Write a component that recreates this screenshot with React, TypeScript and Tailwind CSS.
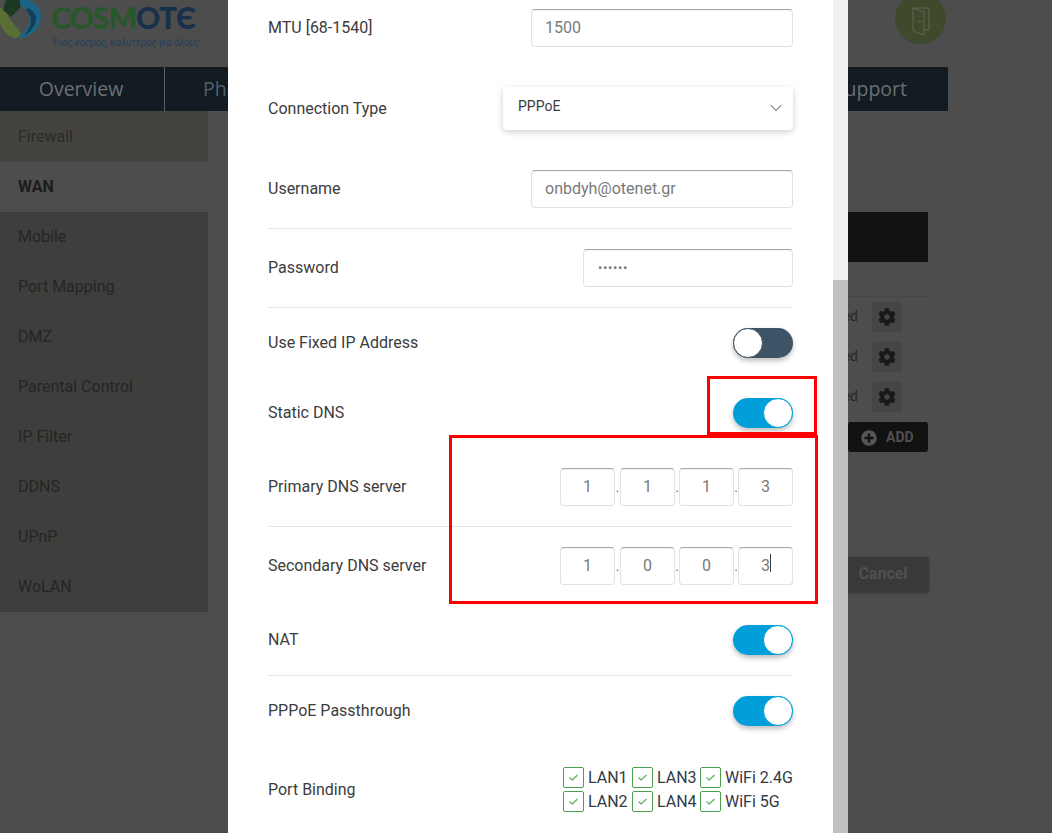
import React from "react";
import { ChevronDown } from "lucide-react";
import { FaCog, FaPlusCircle } from "react-icons/fa";

const inputBase =
  "h-[38px] rounded-[4px] border border-[#e2e2e2] border-t-[#a8a8a8] bg-white text-base text-[#7a7a7a] shadow-[inset_0_1px_1px_rgba(0,0,0,0.05)] flex items-center";

function Toggle({ on }: { on: boolean }) {
  return on ? (
    <div className="h-[30px] w-[60px] rounded-full bg-[#009fda] flex justify-end shadow-[0_3px_5px_rgba(0,0,0,0.25)]">
      <div className="h-[30px] w-[30px] rounded-full bg-white border border-[#009fda]" />
    </div>
  ) : (
    <div className="h-[30px] w-[60px] rounded-full bg-[#3d5366] flex justify-start shadow-[0_3px_5px_rgba(0,0,0,0.25)]">
      <div className="h-[30px] w-[30px] rounded-full bg-white border border-[#3d5366]" />
    </div>
  );
}

function Label({ children }: { children: React.ReactNode }) {
  return <span className="text-base text-[#3c3c3c]">{children}</span>;
}

function IpBox({ value, caret }: { value: string; caret?: boolean }) {
  return (
    <div className={`${inputBase} w-[55px] justify-center`}>
      <span className="relative">
        {value}
        {caret && <span className="absolute left-[9px] top-0 h-[18px] w-px bg-[#3c3c3c]" />}
      </span>
    </div>
  );
}

function IpRow({ values, caretLast }: { values: string[]; caretLast?: boolean }) {
  return (
    <div className="flex items-center">
      {values.map((v, i) => (
        <React.Fragment key={i}>
          {i > 0 && (
            <span
              className={`${i === 1 ? "w-[5px]" : "w-[4px]"} self-end pb-[12px] text-center text-[12px] leading-[12px] text-[#555]`}
            >
              .
            </span>
          )}
          <IpBox value={v} caret={caretLast && i === 3} />
        </React.Fragment>
      ))}
    </div>
  );
}

function Check({ label }: { label: string }) {
  return (
    <div className="flex items-center gap-[4px] h-[21px]">
      <div className="h-[21px] w-[21px] shrink-0 rounded-[2px] border border-[#4aa04e] flex items-center justify-center">
        <svg width="11" height="9" viewBox="0 0 11 9" fill="none">
          <path d="M1.5 4.5 L4.2 7 L9.5 2" stroke="#6cbb70" strokeWidth="1.6" />
        </svg>
      </div>
      <span className="text-base leading-[21px] text-[#333a44] whitespace-nowrap">{label}</span>
    </div>
  );
}

function SettingRow({ label }: { label: string }) {
  return (
    <div className="h-[30px] flex items-center justify-end gap-[14px] mb-[10px] mr-[26px]">
      <span className="text-sm text-[#262626] -mt-[2px]">Enabled</span>
      <div className="h-[30px] w-[30px] rounded-[3px] bg-[#454545] flex items-center justify-center" aria-label={label}>
        <FaCog className="text-[#191919] text-[18px]" />
      </div>
    </div>
  );
}

const sideItems = ["Firewall", "WAN", "Mobile", "Port Mapping", "DMZ", "Parental Control", "IP Filter", "DDNS", "UPnP", "WoLAN"];

function Logo() {
  return (
    <div className="flex items-start">
      <svg width="45" height="40" viewBox="0 0 45 40" className="shrink-0">
        <path d="M0 8 C-3 18 0 33 14 38 C20 38 19 36 21 33 L10 19 C7 16 8 12 10 9 Z" fill="#5a6f34" />
        <path d="M6 0 H22 L20 8 L11 17 L3 10 Z" fill="#1c3a22" />
        <path d="M20 0 C34 -2 42 8 41 18 C40 30 30 38 17 38 C22 34 26 31 29 24 C32 19 30 14 26 10 L20 5 Z" fill="#1c6485" />
        <path d="M26 10 C33 17 33 26 24 35 C30 33 36 26 36 18 C36 14 32 10 28 8 Z" fill="#123f5c" />
      </svg>
      <div className="ml-[6px] flex flex-col">
        <div className="font-['Lato'] font-black text-[30px] leading-[34px] tracking-[-0.9px] h-[36px] whitespace-nowrap">
          <span className="text-[#27582a]">COSM</span>
          <span className="text-[#19304a]">OTЄ</span>
        </div>
        <div className="mt-[1px] text-[10px] leading-[12px] italic tracking-[-0.2px] text-[#24405a] whitespace-nowrap ml-[1px]">
          Ένας κόσμος, καλύτερος για όλους.
        </div>
      </div>
    </div>
  );
}

function Door() {
  return (
    <div className="-mt-[7px] mr-[106px] h-[51px] w-[51px] rounded-full bg-[#3f4a2d] flex items-center justify-center">
      <svg width="20" height="32" viewBox="0 0 20 32" fill="none" stroke="#5c6650" strokeWidth="1" className="mt-[7px]">
        <path d="M2 2 H18 V24 H13" />
        <path d="M2 2 L13 6 V29 L2 25 Z" />
        <circle cx="9" cy="15.5" r="0.8" fill="#5c6650" />
      </svg>
    </div>
  );
}

export default function App() {
  return (
    <div className="relative h-[833px] w-[1052px] overflow-hidden bg-[#4d4d4d] font-['Roboto',sans-serif]">
      <header className="h-[67px] flex items-start justify-between overflow-hidden">
        <Logo />
        <Door />
      </header>

      <nav className="h-[44px] w-[948px] bg-[#121a22] flex items-center text-[19.5px] text-[#6b7075] font-['Open_Sans',sans-serif]">
        <div className="h-full w-[165px] pr-[2px] border-r border-[#5b6167] flex items-center justify-center">Overview</div>
        <div className="ml-[38px] text-[#4f6070]">Phone</div>
        <div className="ml-auto mr-[41px]">Support</div>
      </nav>

      <div className="flex">
        <aside className="w-[208px]">
          {sideItems.map((s, i) => (
            <div
              key={s}
              className={`pl-[18px] flex items-center text-base ${
                i === 0
                  ? "h-[51px] bg-[#444340] text-[#2a2a2a]"
                  : i === 1
                    ? "h-[50px] font-bold text-[#1c1c1c]"
                    : "h-[50px] bg-[#3e3e3c] text-[#252525]"
              }`}
            >
              {s}
            </div>
          ))}
        </aside>

        <main className="w-[720px] pt-[101px] pl-[400px]">
          <div className="h-[50px] bg-[#121212]" />
          <div className="mt-[34px] border-t border-[#454545] pt-[5px]">
            <SettingRow label="Settings 1" />
            <SettingRow label="Settings 2" />
            <SettingRow label="Settings 3" />
          </div>
          <div className="flex justify-end">
            <div className="h-[30px] w-[80px] rounded-[3px] bg-[#121212] flex items-center gap-[9px] pl-[13px]">
              <FaPlusCircle className="text-[#555] text-[16px] mt-[1px]" />
              <span className="text-sm font-bold text-[#505050] -mt-[1px]">ADD</span>
            </div>
          </div>
          <div className="mt-[105px] flex justify-end -mr-px">
            <div className="h-[35px] w-[92px] rounded-[3px] bg-[#393939] shadow-[0_1px_3px_rgba(0,0,0,0.3)] flex items-center justify-center text-base font-bold text-[#505050]">
              <span className="-mt-[2px]">Cancel</span>
            </div>
          </div>
        </main>
      </div>

      {/* Modal */}
      <div className="absolute left-[228px] top-0 h-[833px] w-[620px] bg-white flex">
        <div className="w-[605px] px-[40px] pt-[9px]">
          <div className="flex h-[38px] items-center justify-between">
            <Label>MTU [68-1540]</Label>
            <div className={`${inputBase} w-[262px] pl-[13px]`}>1500</div>
          </div>

          <div className="mt-[40px] flex h-[43px] items-center justify-between">
            <Label>Connection Type</Label>
            <div className="h-[43px] w-[290px] rounded-[4px] bg-white shadow-[0_2px_6px_rgba(0,0,0,0.2)] flex items-center justify-between pl-[15px] pr-[7px] text-sm text-[#3a3a3a]">
              <span className="-mt-[5px]">PPPoE</span>
              <ChevronDown size={20} strokeWidth={1.5} className="text-[#999] -mt-[1px]" />
            </div>
          </div>

          <div className="mt-[40px] flex h-[59px] items-start justify-between border-b border-[#e4e4e4]">
            <div className="flex h-[38px] items-center"><Label>Username</Label></div>
            <div className={`${inputBase} w-[262px] pl-[13px]`}>onbdyh@otenet.gr</div>
          </div>

          <div className="mt-[20px] flex h-[59px] items-start justify-between border-b border-[#e4e4e4]">
            <div className="flex h-[38px] items-center"><Label>Password</Label></div>
            <div className={`${inputBase} w-[210px] pl-[14px] text-[13px] tracking-[0.6px]`}>••••••</div>
          </div>

          <div className="mt-[20px] flex h-[30px] items-center justify-between">
            <Label>Use Fixed IP Address</Label>
            <Toggle on={false} />
          </div>

          <div className="mt-[40px] flex h-[30px] items-center justify-between">
            <Label>Static DNS</Label>
            <Toggle on />
          </div>

          <div className="mt-[40px] flex h-[59px] items-start justify-between border-b border-[#e4e4e4]">
            <div className="flex h-[38px] items-center"><Label>Primary DNS server</Label></div>
            <IpRow values={["1", "1", "1", "3"]} />
          </div>

          <div className="mt-[20px] flex h-[38px] items-center justify-between">
            <Label>Secondary DNS server</Label>
            <IpRow values={["1", "0", "0", "3"]} caretLast />
          </div>

          <div className="mt-[40px] flex h-[51px] items-start justify-between border-b border-[#e4e4e4]">
            <div className="flex h-[30px] items-center"><Label>NAT</Label></div>
            <Toggle on />
          </div>

          <div className="mt-[20px] flex h-[30px] items-center justify-between">
            <Label>PPPoE Passthrough</Label>
            <Toggle on />
          </div>

          <div className="mt-[41px] flex h-[45px] items-center justify-between">
            <Label>Port Binding</Label>
            <div className="grid grid-cols-[65px_64px_auto] gap-y-[3px] gap-x-[4px] w-[230px]">
              <Check label="LAN1" />
              <Check label="LAN3" />
              <Check label="WiFi 2.4G" />
              <Check label="LAN2" />
              <Check label="LAN4" />
              <Check label="WiFi 5G" />
            </div>
          </div>
        </div>

        <div className="w-[15px] flex flex-col">
          <div className="h-[280px] bg-[#f0f0f0]" />
          <div className="flex-1 bg-[#c0c0c0]" />
        </div>
      </div>

      {/* Red annotation boxes */}
      <div className="absolute left-[707px] top-[376px] h-[59px] w-[110px] border-[3px] border-[#ff0000]" />
      <div className="absolute left-[449px] top-[435px] h-[169px] w-[369px] border-[3px] border-[#ff0000]" />
    </div>
  );
}
